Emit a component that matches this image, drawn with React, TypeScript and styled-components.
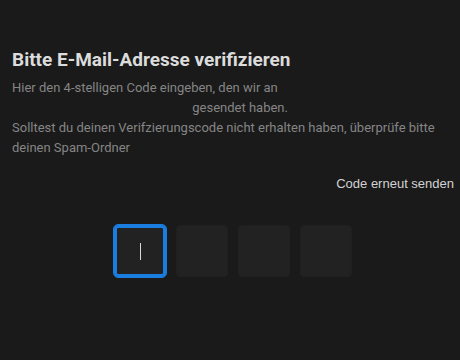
import React from "react";
import styled, { createGlobalStyle } from "styled-components";

const GlobalStyle = createGlobalStyle`
  html, body {
    margin: 0;
    padding: 0;
    background: #1a1a1a;
  }
  body {
    font-family: Roboto, "Liberation Sans", sans-serif;
  }
`;

const Page = styled.div`
  width: 460px;
  height: 360px;
  box-sizing: border-box;
  padding: 46px 6px 0 12px;
  background: #1a1a1a;
`;

const Title = styled.h1`
  margin: 0 0 4px;
  font-size: 19px;
  font-weight: 700;
  line-height: 28px;
  color: #dcdcdc;
`;

const Text = styled.p`
  margin: 0;
  padding-right: 8px;
  font-size: 13px;
  line-height: 20px;
  color: #858585;
`;

const EmailSlot = styled.span`
  display: inline-block;
  width: 177px;
  height: 1px;
`;

const ResendRow = styled.div`
  display: flex;
  justify-content: flex-end;
  margin-top: 18px;
`;

const ResendButton = styled.button`
  background: none;
  border: none;
  padding: 0;
  font-family: "Liberation Sans", Arial, sans-serif;
  font-size: 13px;
  color: #d2d2d2;
  cursor: pointer;
`;

const CodeRow = styled.div`
  display: flex;
  gap: 10px;
  margin-top: 34px;
  padding-left: 102px;
`;

const CodeBox = styled.div<{ $active?: boolean }>`
  width: 52px;
  height: 52px;
  box-sizing: border-box;
  border-radius: 4px;
  background: #222222;
  display: flex;
  align-items: center;
  justify-content: center;
  border: ${({ $active }) => ($active ? "3px solid #1a7ee0" : "1px solid #202020")};
  ${({ $active }) => ($active ? "outline: 1px solid #1a7ee0; outline-offset: 0;" : "")}
`;

const Caret = styled.span`
  width: 1px;
  height: 17px;
  background: #d8d8d8;
`;

export default function App() {
  return (
    <>
      <GlobalStyle />
      <Page>
        <Title>Bitte E-Mail-Adresse verifizieren</Title>
        <Text>
          Hier den 4-stelligen Code eingeben, den wir an <EmailSlot /> gesendet haben.
        </Text>
        <Text>
          Solltest du deinen Verifzierungscode nicht erhalten haben, überprüfe bitte deinen Spam-Ordner
        </Text>
        <ResendRow>
          <ResendButton>Code erneut senden</ResendButton>
        </ResendRow>
        <CodeRow>
          {[0, 1, 2, 3].map((i) => (
            <CodeBox key={i} $active={i === 0}>
              {i === 0 && <Caret />}
            </CodeBox>
          ))}
        </CodeRow>
      </Page>
    </>
  );
}
